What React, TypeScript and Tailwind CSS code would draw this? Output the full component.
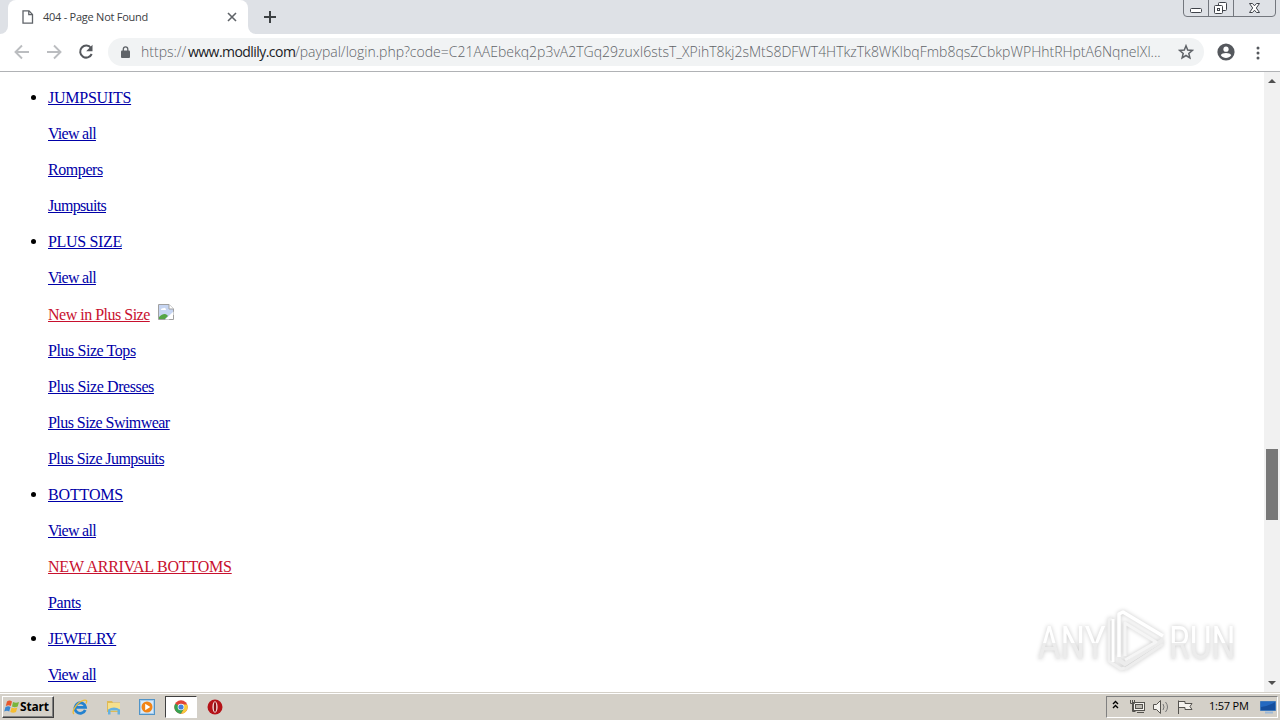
import type { ReactNode } from "react";

type MenuLink = {
  label: string;
  tracking: string;
  red?: boolean;
  image?: boolean;
};

const sections: MenuLink[][] = [
  [
    { label: "JUMPSUITS", tracking: "tracking-[-0.25px]" },
    { label: "View all", tracking: "tracking-[-0.72px]" },
    { label: "Rompers", tracking: "tracking-[-0.43px]" },
    { label: "Jumpsuits", tracking: "tracking-[-0.67px]" },
  ],
  [
    { label: "PLUS SIZE", tracking: "tracking-[-0.33px]" },
    { label: "View all", tracking: "tracking-[-0.72px]" },
    { label: "New in Plus Size", tracking: "tracking-[-0.5px]", red: true, image: true },
    { label: "Plus Size Tops", tracking: "tracking-[-0.43px]" },
    { label: "Plus Size Dresses", tracking: "tracking-[-0.41px]" },
    { label: "Plus Size Swimwear", tracking: "tracking-[-0.55px]" },
    { label: "Plus Size Jumpsuits", tracking: "tracking-[-0.58px]" },
  ],
  [
    { label: "BOTTOMS", tracking: "tracking-[-0.15px]" },
    { label: "View all", tracking: "tracking-[-0.72px]" },
    { label: "NEW ARRIVAL BOTTOMS", tracking: "tracking-[-0.22px]", red: true },
    { label: "Pants", tracking: "tracking-[-0.35px]" },
  ],
  [
    { label: "JEWELRY", tracking: "tracking-[-0.54px]" },
    { label: "View all", tracking: "tracking-[-0.72px]" },
  ],
];

function BrokenImage() {
  return (
    <svg width="16" height="16" viewBox="0 0 16 16" className="mb-1 ml-2">
      <path d="M.5.5H11L15.500 5v10.500H.5z" fill="#fff" stroke="#a0a0a0" />
      <path d="M1 1h10v4h4v4l-6 6H1z" fill="#c6d5f2" />
      <path d="M11 .5V5h4.500" fill="#fff" stroke="#a0a0a0" />
      <path d="M3 6c0-1 1-2 2-1.500C6 3 8 4 8 6z" fill="#fff" />
      <path d="M1 15v-2c3-3 6-4 8-2l1 1-3 3z" fill="#55a545" />
      <path d="M7 15.500L15.500 7.500v3L11 15.500z" fill="#fff" />
    </svg>
  );
}

function TabStrip() {
  return (
    <div className="flex h-[34px] items-stretch bg-[#dee1e6]">
      <div className="w-2 bg-white">
        <div className="h-full rounded-br-lg bg-[#dee1e6]" />
      </div>
      <div className="flex w-[240px] items-center rounded-t-lg bg-white pl-[14px] pr-[10px]">
        <svg width="12" height="14" viewBox="0 0 12 14" fill="none" stroke="#5f6368" strokeWidth="1.3">
          <path d="M1 .8h6L10.500 4.500v8.700H1z" />
          <path d="M6.800 1v3.700h3.700" />
        </svg>
        <span className="ml-[9px] grow whitespace-nowrap font-['Open_Sans'] text-[11px] tracking-[-0.25px] text-[#3c4043]">
          404 - Page Not Found
        </span>
        <svg width="12" height="12" viewBox="0 0 12 12" stroke="#5f6368" strokeWidth="1.600">
          <path d="M2 2l8 8M10 2l-8 8" />
        </svg>
      </div>
      <div className="w-2 bg-white">
        <div className="h-full rounded-bl-lg bg-[#dee1e6]" />
      </div>
      <svg width="12" height="12" viewBox="0 0 12 12" stroke="#3c4043" strokeWidth="2" className="ml-2 mt-[11px]">
        <path d="M6 0v12M0 6h12" />
      </svg>
      <svg width="94" height="17" viewBox="0 0 94 17" fill="none" stroke="#73777e" className="ml-auto mr-[3px]">
        <path d="M.5 0v13q0 3.500 3.500 3.500h85q3.500 0 3.500-3.500V0M25.500 0v16.500M50.500 0v16.500" />
        <g stroke="#3f434a" fill="#fff">
          <rect x="7.500" y="8.500" width="11" height="4" rx="1" />
          <rect x="35.500" y="2.500" width="8" height="8" rx="1" />
          <rect x="31.500" y="5.500" width="8" height="8" rx="1" />
          <rect x="34.500" y="8.500" width="2" height="2" />
          <path d="M66.500 3.500h3l2 2.300 2-2.300h3l-3.200 4.500 3.200 4.500h-3l-2-2.300-2 2.300h-3l3.200-4.500z" />
        </g>
      </svg>
    </div>
  );
}

function Toolbar() {
  return (
    <div className="flex h-[38px] items-center border-b border-[#b0b2b5] bg-white">
      <svg width="16" height="16" viewBox="0 0 16 16" fill="none" stroke="#bbbdc0" strokeWidth="1.900" className="mb-[2px] ml-[14px]">
        <path d="M15 8H2M8 1.500L1.500 8 8 14.500" />
      </svg>
      <svg width="16" height="16" viewBox="0 0 16 16" fill="none" stroke="#bbbdc0" strokeWidth="1.900" className="mb-[2px] ml-4">
        <path d="M1 8h13M8 1.500L14.500 8 8 14.500" />
      </svg>
      <svg width="16" height="16" viewBox="0 0 16 16" fill="none" stroke="#55585d" strokeWidth="2" className="mb-[2px] ml-4">
        <path d="M13 4A6 6 0 1 0 13.700 10" />
        <path d="M14.500.8v6.400H8.200z" fill="#55585d" stroke="none" />
      </svg>
      <div className="mb-px ml-[14px] flex h-7 w-[1096px] items-center rounded-full bg-[#f1f3f4]">
        <svg width="10" height="13" viewBox="0 0 10 13" className="ml-[13px] shrink-0">
          <rect x="0" y="4.500" width="9" height="7.500" rx="1" fill="#5f6368" />
          <path d="M2.300 5V3.200a2.200 2.200 0 0 1 4.500 0V5" fill="none" stroke="#5f6368" strokeWidth="1.300" />
        </svg>
        <div className="mb-[2px] ml-[10px] flex w-[1031px] whitespace-nowrap font-['Open_Sans'] text-[14px] font-light text-[#5f6368]">
          <span className="w-[47px] shrink-0">https://</span>
          <span className="w-[107px] shrink-0 font-normal tracking-[-0.55px] text-[#202124]">www.modlily.com</span>
          <span className="shrink-0">
            /paypal/login.php?code=C21AAEbekq2p3vA2TGq29zuxI6stsT_XPihT8kj2sMtS8DFWT4HTkzTk8WKIbqFmb8qsZCbkpWPHhtRHptA6NqneIXl...
          </span>
        </div>
        <svg width="16" height="16" viewBox="0 0 16 16" fill="none" stroke="#5f6368" strokeWidth="1.500" className="ml-[6px] shrink-0">
          <path d="M8 1.800l1.700 4.300 4.600.3-3.500 3 1.100 4.500L8 11.500l-3.900 2.400 1.100-4.500-3.500-3 4.600-.3z" />
        </svg>
      </div>
      <svg width="18" height="18" viewBox="0 0 18 18" className="mb-[2px] ml-[13px]">
        <circle cx="9" cy="9" r="8.600" fill="#55585d" />
        <circle cx="9" cy="6.200" r="2.600" fill="#fff" />
        <path d="M3.800 12.300c1-3 9.400-3 10.400 0-2.600 3.600-7.800 3.600-10.400 0z" fill="#fff" />
      </svg>
      <svg width="4" height="14" viewBox="0 0 4 14" fill="#55585d" className="ml-[21px]">
        <circle cx="2" cy="2" r="1.500" />
        <circle cx="2" cy="7" r="1.500" />
        <circle cx="2" cy="12" r="1.500" />
      </svg>
    </div>
  );
}

function Scrollbar() {
  return (
    <div className="flex w-4 flex-col items-center bg-[#f1f1f1]">
      <svg width="8" height="4" viewBox="0 0 8 4" fill="#505050" className="mt-[7px]">
        <path d="M0 4l4-4 4 4z" />
      </svg>
      <div className="mt-[366px] h-[71px] w-3 bg-[#787878]" />
      <svg width="8" height="4" viewBox="0 0 8 4" fill="#505050" className="mb-[7px] mt-auto">
        <path d="M0 0l4 4 4-4z" />
      </svg>
    </div>
  );
}

function Watermark() {
  return (
    <div className="absolute left-[1038px] top-[608px] flex h-[66px] w-[200px] items-center font-['Roboto'] text-[46px] leading-none [filter:drop-shadow(0_0_2px_rgba(0,0,0,0.22))]">
      <span className="mt-1 w-[67px] shrink-0">
        <span className="inline-block origin-left scale-x-[0.75] bg-linear-to-b from-white from-50% to-[#ececec] to-50% bg-clip-text text-transparent">
          ANY
        </span>
      </span>
      <svg width="64" height="64" viewBox="0 0 64 64" fill="none" strokeLinejoin="round" className="shrink-0">
        <path d="M7 9L4 11V52L16 60L20 59" stroke="#f0f0f0" strokeWidth="3" />
        <path d="M8 53V10" stroke="#fff" strokeWidth="3" />
        <path d="M14 48V5L18 3L58 27" stroke="#fff" strokeWidth="3.500" />
        <path d="M14 51L20 55L58 31" stroke="#ececec" strokeWidth="4" />
        <path d="M20 60L58 35" stroke="#ededed" strokeWidth="3" />
        <path d="M20 47V14L51 33L20 51" stroke="#f5f5f5" strokeWidth="3" />
      </svg>
      <span className="mt-1 inline-block origin-left scale-x-[0.73] bg-linear-to-b from-white from-50% to-[#ececec] to-50% bg-clip-text text-transparent">
        RUN
      </span>
    </div>
  );
}

function QuickLaunch({ children, active }: { children: ReactNode; active?: boolean }) {
  return (
    <div
      className={
        active
          ? "flex h-[22px] w-8 items-center justify-center border border-[#fff] border-l-[#404040] border-t-[#404040] bg-white"
          : "flex h-[22px] w-8 items-center justify-center"
      }
    >
      <svg width="16" height="16" viewBox="0 0 16 16">
        {children}
      </svg>
    </div>
  );
}

function Taskbar() {
  return (
    <div className="flex h-7 items-center border-t border-[#d4d0c8] bg-[#d4d0c8] font-['Open_Sans'] text-black shadow-[inset_0_1px_0_#fff]">
      <div className="ml-[2px] flex h-[22px] w-[52px] items-center border border-[#404040] border-l-white border-t-white pl-px shadow-[inset_-1px_-1px_0_#808080]">
        <svg width="16" height="16" viewBox="0 0 16 16" className="shrink-0">
          <path d="M3 2.500c2-1.500 3.500-1 5 0L6.800 7c-1.500-1-3-1-5 0z" fill="#e8582c" />
          <path d="M9 3c2 1 4 1 6 0l-1.300 4.500c-2 1-3.700 1-5.700 0z" fill="#79b53b" />
          <path d="M1.500 8c2-1 3.500-1 5 0L5.200 12.500c-1.500-1-3-1-5 0z" fill="#3b87d1" />
          <path d="M7.600 8.500c2 1 3.700 1 5.700 0L12 13c-2 1-3.700 1-5.700 0z" fill="#f6bd31" />
        </svg>
        <span className="text-[12px] font-bold tracking-[-0.2px]">Start</span>
      </div>
      <div className="ml-[10px] flex gap-[1.700px]">
        <QuickLaunch>
          <path d="M13.200 11A5.300 5.300 0 1 1 13.500 8.300H4" fill="none" stroke="#2482cf" strokeWidth="2.800" />
          <path d="M2 15C-1 13 5 3 11.500 1.300 14.500.7 15.500 1.500 14 4.500" fill="none" stroke="#edbc36" strokeWidth="1.300" />
        </QuickLaunch>
        <QuickLaunch>
          <path d="M1 2h5l1 1.500h7V13H1z" fill="#dfba56" />
          <path d="M2 4h12v8H2z" fill="#f6e08c" />
          <path d="M2 10.500q6-4 12 0V15.500h-2.500v-4h-7v4H2z" fill="#65b1e0" />
        </QuickLaunch>
        <QuickLaunch>
          <rect x=".5" y=".5" width="15" height="15" fill="#a9cdec" stroke="#5094c8" />
          <rect x="2" y="2" width="12" height="12" fill="#d6eafb" />
          <circle cx="8" cy="8" r="5.500" fill="#f28416" />
          <path d="M6.200 4.700v6.600L11.300 8z" fill="#fff" />
        </QuickLaunch>
        <QuickLaunch active>
          <circle cx="8" cy="8" r="6.700" fill="#e14437" />
          <path d="M8 8L2.200 4.700A6.700 6.700 0 0 0 8 14.700l3-5z" fill="#36a352" />
          <path d="M8 14.700A6.700 6.700 0 0 0 14.200 5.500H8l3 4.200z" fill="#f8cb3b" />
          <circle cx="8" cy="8" r="3.300" fill="#fff" />
          <circle cx="8" cy="8" r="2.600" fill="#4580dd" />
        </QuickLaunch>
        <QuickLaunch>
          <circle cx="8" cy="8" r="7.500" fill="#b51218" />
          <ellipse cx="8" cy="8" rx="2.600" ry="5.800" fill="#f5dada" />
          <ellipse cx="8" cy="8" rx="1.200" ry="4.900" fill="#8c1014" />
        </QuickLaunch>
      </div>
      <div className="ml-auto mr-[2px] flex h-[22px] w-[172px] items-center border border-white border-l-[#808080] border-t-[#808080]">
        <svg width="7" height="9" viewBox="0 0 7 9" fill="none" stroke="#000" strokeWidth="1.400" className="mb-1 ml-[5px]">
          <path d="M1 4l2.500-2.500L6 4M1 8l2.500-2.500L6 8" />
        </svg>
        <svg width="64" height="16" viewBox="0 0 64 16" fill="#f4f2ee" stroke="#55534f" className="ml-[10px]">
          <rect x="4.500" y="3.500" width="11" height="8" />
          <rect x="6.500" y="5.500" width="7" height="4" fill="#bbb8b1" />
          <path d="M8 13.500h7M1.500 1v3.500h4V1M3.500 1v11.500h3" fill="none" />
          <path d="M24.500 5.500h3l4-4v13l-4-4h-3z" />
          <path d="M34 5q2 3 0 6M36.500 3q4 5 0 10" fill="none" stroke="#777" />
          <path d="M49.500 15V1.500M50 2.500h6v2h7l-2 3 2 3h-7v-2h-6" />
        </svg>
        <span className="ml-[16px] w-[41px] whitespace-nowrap text-[11px] tracking-[-0.2px]">1:57 PM</span>
        <svg width="16" height="14" viewBox="0 0 16 14" className="ml-[10px]">
          <path d="M.5 1.500h15v9H.5z" fill="#2469c0" stroke="#3f79bb" />
          <path d="M1 7q8-1 14-5v8H1z" fill="#164f9d" />
          <path d="M5 12.500h8" stroke="#9db9d7" strokeWidth="2" />
        </svg>
      </div>
    </div>
  );
}

export default function App() {
  return (
    <div className="relative flex h-[720px] w-[1280px] flex-col overflow-hidden bg-white">
      <TabStrip />
      <Toolbar />
      <div className="flex min-h-0 grow overflow-hidden">
        <ul className="flex grow flex-col gap-[18px] pl-[31px] pt-[17px] font-['Liberation_Serif'] text-[16px] leading-[18px]">
          {sections.map((links) => (
            <li key={links[0].label} className="flex">
              <span className="mr-3 mt-[6px] h-[5px] w-[5px] rounded-full bg-black" />
              <div className="flex flex-col gap-[18px]">
                {links.map((link) => (
                  <p key={link.label} className={link.image ? "flex h-[19px] items-end" : "flex h-[18px]"}>
                    <a
                      className={`whitespace-nowrap underline ${link.red ? "text-[#c8102e]" : "text-[#0000a8]"} ${link.tracking}`}
                    >
                      {link.label}
                    </a>
                    {link.image && <BrokenImage />}
                  </p>
                ))}
              </div>
            </li>
          ))}
        </ul>
        <Scrollbar />
      </div>
      <Taskbar />
      <Watermark />
    </div>
  );
}
